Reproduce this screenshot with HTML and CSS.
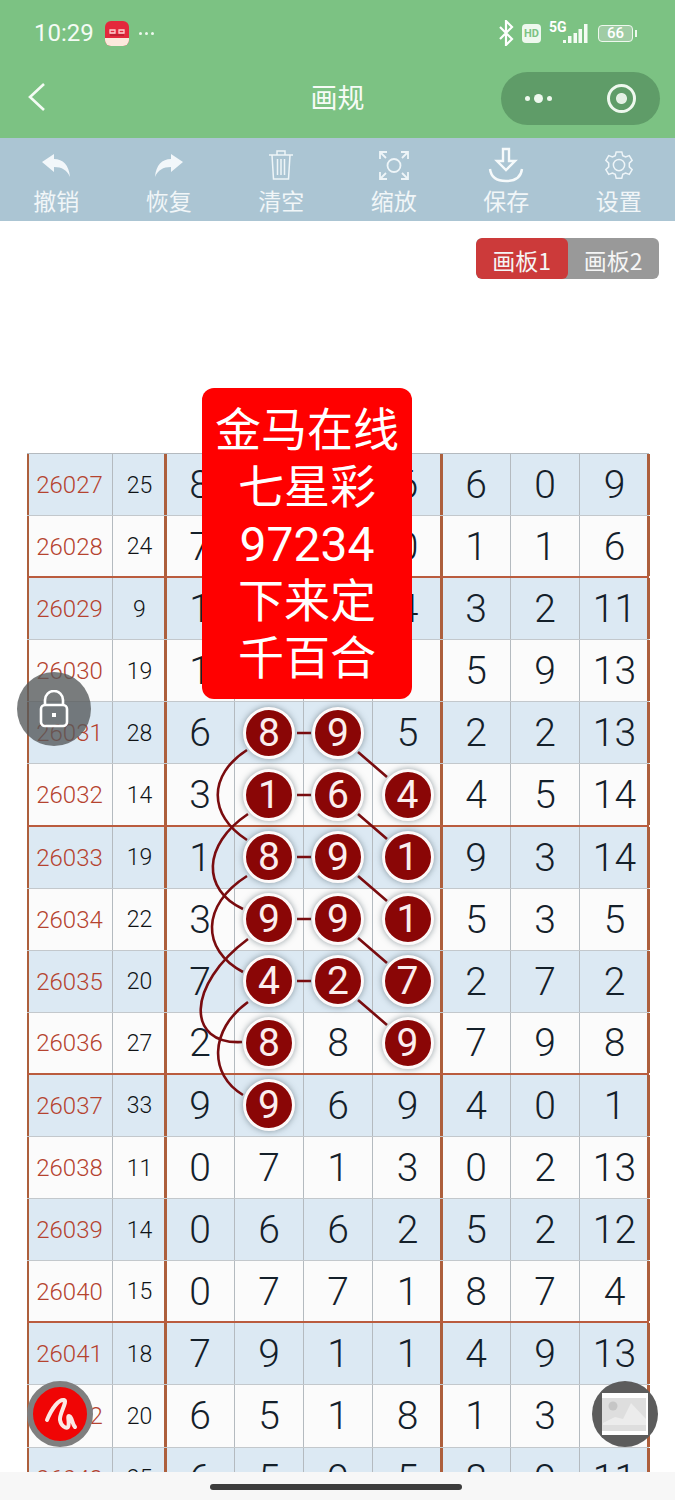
FILE: index.html
```html
<!DOCTYPE html>
<html>
<head>
   <meta charset="utf-8" />
   <title>画规</title>
   <link rel="stylesheet" href="styles.css">
</head>
<body>
   <header class="app-head">
       <div class="status-bar">
           <div class="status-left">
               <span class="time">10:29</span>
               <svg class="app-icon" width="24" height="25" viewBox="0 0 24 25">
                   <rect x="0" y="0" width="24" height="25" rx="6" fill="#e4283c"/>
                   <path d="M0 17h24v2a6 6 0 0 1-6 6H6a6 6 0 0 1-6-6z" fill="#fbe9dc"/>
                   <path d="M5 12V9h5v3zM14 12V9h5v3z" fill="none" stroke="#fbd3d3" stroke-width="1.300"/>
                   <path d="M5 14h14" stroke="#b81c2e" stroke-width="1.500"/>
               </svg>
               <span class="more-dots"><i></i><i></i><i></i></span>
           </div>
           <div class="status-right">
               <svg width="16" height="26" viewBox="0 0 16 26" fill="none" stroke="#fff" stroke-width="2.2">
                   <path d="M2 7l12 12-6 6V1l6 6L2 19"/>
               </svg>
               <span class="hd">HD</span>
               <div class="net">
                   <span class="net-label">5G</span>
                   <svg width="25" height="20" viewBox="0 0 25 20" fill="#f4fbf4">
                       <rect x="0" y="16" width="3" height="3"/><rect x="5" y="12" width="3.500" height="7"/>
                       <rect x="10.500" y="9" width="3.500" height="10"/><rect x="15.500" y="5" width="3.500" height="14"/>
                       <rect x="21" y="0" width="3.500" height="19"/>
                   </svg>
               </div>
               <div class="battery"><span class="battery-body">66</span><span class="battery-tip"></span></div>
           </div>
       </div>
       <div class="nav-bar">
           <svg class="back" width="20" height="32" viewBox="0 0 20 32" fill="none" stroke="#f4fbf4" stroke-width="2.6">
               <path d="M17 3L3 16l14 13"/>
           </svg>
           <span class="nav-title">画规</span>
           <div class="capsule">
               <span class="capsule-dots"><i></i><b></b><i></i></span>
               <span class="capsule-target"></span>
           </div>
       </div>
   </header>

   <nav class="toolbar">
       <div class="tool">
           <div class="tool-icon"><svg width="30" height="23" viewBox="0 0 30 23" fill="#f2f7fa"><path d="M1 8L13 0v5c9 0 15 6 16 18-3-7-8-10-16-10v5z"/></svg></div>
           <span>撤销</span>
       </div>
       <div class="tool">
           <div class="tool-icon"><svg width="30" height="23" viewBox="0 0 30 23" fill="#f2f7fa"><path d="M29 8L17 0v5C8 5 2 11 1 23c3-7 8-10 16-10v5z"/></svg></div>
           <span>恢复</span>
       </div>
       <div class="tool">
           <div class="tool-icon"><svg width="28" height="32" viewBox="0 0 28 32" fill="none" stroke="#eef5f8" stroke-width="1.5">
               <path d="M2 6h24M10 6V2h8v4M5 6l1.500 24h15L23 6M10.500 10v16M14 10v16M17.500 10v16"/>
           </svg></div>
           <span>清空</span>
       </div>
       <div class="tool">
           <div class="tool-icon"><svg width="30" height="29" viewBox="0 0 30 29" fill="none" stroke="#eef5f8" stroke-width="1.800">
               <circle cx="15" cy="14.500" r="6.500"/>
               <path d="M1 8V1h7M1 1l6 6M29 8V1h-7M29 1l-6 6M1 21v7h7M1 28l6-6M29 21v7h-7M29 28l-6-6"/>
           </svg></div>
           <span>缩放</span>
       </div>
       <div class="tool">
           <div class="tool-icon"><svg width="36" height="36" viewBox="0 0 36 36" fill="none" stroke="#f6fafb" stroke-width="2.4">
               <path d="M15 2h6v12h6l-9 9-9-9h6zM2 22c1 8 7 12 16 12s15-4 16-12"/>
           </svg></div>
           <span>保存</span>
       </div>
       <div class="tool">
           <div class="tool-icon"><svg width="30" height="30" viewBox="0 0 32 32" fill="none" stroke="#eef5f8" stroke-width="1.600">
               <path d="M13 2h6l1 4 3 1.500 4-1.500 3 5-3 3v4l3 3-3 5-4-1.500-3 1.500-1 4h-6l-1-4-3-1.500-4 1.500-3-5 3-3v-4l-3-3 3-5 4 1.500 3-1.500z"/>
               <circle cx="16" cy="16" r="6"/>
           </svg></div>
           <span>设置</span>
       </div>
   </nav>

   <main class="content">
       <div class="tabs">
           <span class="tab tab-on">画板1</span>
           <span class="tab">画板2</span>
       </div>

       <div class="board">
           <div class="row blue"><span class="c-id">26027</span><span class="c-sum">25</span><span class="c-num bar">8</span><span class="c-num"></span><span class="c-num"></span><span class="c-num">6</span><span class="c-num bar">6</span><span class="c-num">0</span><span class="c-num">9</span></div>
           <div class="row sep"><span class="c-id">26028</span><span class="c-sum">24</span><span class="c-num bar">7</span><span class="c-num"></span><span class="c-num"></span><span class="c-num">0</span><span class="c-num bar">1</span><span class="c-num">1</span><span class="c-num">6</span></div>
           <div class="row blue"><span class="c-id">26029</span><span class="c-sum">9</span><span class="c-num bar">1</span><span class="c-num"></span><span class="c-num"></span><span class="c-num">4</span><span class="c-num bar">3</span><span class="c-num">2</span><span class="c-num">11</span></div>
           <div class="row"><span class="c-id">26030</span><span class="c-sum">19</span><span class="c-num bar">1</span><span class="c-num"></span><span class="c-num"></span><span class="c-num"></span><span class="c-num bar">5</span><span class="c-num">9</span><span class="c-num">13</span></div>
           <div class="row blue"><span class="c-id">26031</span><span class="c-sum">28</span><span class="c-num bar">6</span><span class="c-num"><b class="ball">8</b></span><span class="c-num"><b class="ball">9</b></span><span class="c-num">5</span><span class="c-num bar">2</span><span class="c-num">2</span><span class="c-num">13</span></div>
           <div class="row sep"><span class="c-id">26032</span><span class="c-sum">14</span><span class="c-num bar">3</span><span class="c-num"><b class="ball">1</b></span><span class="c-num"><b class="ball">6</b></span><span class="c-num"><b class="ball">4</b></span><span class="c-num bar">4</span><span class="c-num">5</span><span class="c-num">14</span></div>
           <div class="row blue"><span class="c-id">26033</span><span class="c-sum">19</span><span class="c-num bar">1</span><span class="c-num"><b class="ball">8</b></span><span class="c-num"><b class="ball">9</b></span><span class="c-num"><b class="ball">1</b></span><span class="c-num bar">9</span><span class="c-num">3</span><span class="c-num">14</span></div>
           <div class="row"><span class="c-id">26034</span><span class="c-sum">22</span><span class="c-num bar">3</span><span class="c-num"><b class="ball">9</b></span><span class="c-num"><b class="ball">9</b></span><span class="c-num"><b class="ball">1</b></span><span class="c-num bar">5</span><span class="c-num">3</span><span class="c-num">5</span></div>
           <div class="row blue"><span class="c-id">26035</span><span class="c-sum">20</span><span class="c-num bar">7</span><span class="c-num"><b class="ball">4</b></span><span class="c-num"><b class="ball">2</b></span><span class="c-num"><b class="ball">7</b></span><span class="c-num bar">2</span><span class="c-num">7</span><span class="c-num">2</span></div>
           <div class="row sep"><span class="c-id">26036</span><span class="c-sum">27</span><span class="c-num bar">2</span><span class="c-num"><b class="ball">8</b></span><span class="c-num">8</span><span class="c-num"><b class="ball">9</b></span><span class="c-num bar">7</span><span class="c-num">9</span><span class="c-num">8</span></div>
           <div class="row blue"><span class="c-id">26037</span><span class="c-sum">33</span><span class="c-num bar">9</span><span class="c-num"><b class="ball">9</b></span><span class="c-num">6</span><span class="c-num">9</span><span class="c-num bar">4</span><span class="c-num">0</span><span class="c-num">1</span></div>
           <div class="row"><span class="c-id">26038</span><span class="c-sum">11</span><span class="c-num bar">0</span><span class="c-num">7</span><span class="c-num">1</span><span class="c-num">3</span><span class="c-num bar">0</span><span class="c-num">2</span><span class="c-num">13</span></div>
           <div class="row blue"><span class="c-id">26039</span><span class="c-sum">14</span><span class="c-num bar">0</span><span class="c-num">6</span><span class="c-num">6</span><span class="c-num">2</span><span class="c-num bar">5</span><span class="c-num">2</span><span class="c-num">12</span></div>
           <div class="row sep"><span class="c-id">26040</span><span class="c-sum">15</span><span class="c-num bar">0</span><span class="c-num">7</span><span class="c-num">7</span><span class="c-num">1</span><span class="c-num bar">8</span><span class="c-num">7</span><span class="c-num">4</span></div>
           <div class="row blue"><span class="c-id">26041</span><span class="c-sum">18</span><span class="c-num bar">7</span><span class="c-num">9</span><span class="c-num">1</span><span class="c-num">1</span><span class="c-num bar">4</span><span class="c-num">9</span><span class="c-num">13</span></div>
           <div class="row"><span class="c-id">26042</span><span class="c-sum">20</span><span class="c-num bar">6</span><span class="c-num">5</span><span class="c-num">1</span><span class="c-num">8</span><span class="c-num bar">1</span><span class="c-num">3</span><span class="c-num">13</span></div>
           <div class="row blue"><span class="c-id">26043</span><span class="c-sum">25</span><span class="c-num bar">6</span><span class="c-num">5</span><span class="c-num">9</span><span class="c-num">5</span><span class="c-num bar">8</span><span class="c-num">9</span><span class="c-num">11</span></div>

           <!-- lines between the balls, coordinates are relative to the page -->
           <svg class="links" width="623" height="1080" viewBox="27 454 623 1080" fill="none" stroke="#7a0c0f" stroke-width="2.6">
               <path d="M297 733h14M297 795h14M297 857h14M297 919h14M297 981h14"/>
               <path d="M358 752l29 25M358 814l29 25M358 876l29 25M358 938l29 25M358 1000l29 25"/>
               <path d="M247 750C208 775 208 815 247 840"/>
               <path d="M248 814C202 845 202 890 243 909"/>
               <path d="M247 876C201 905 201 950 243 972"/>
               <path d="M248 939C186 985 186 1045 242 1042"/>
               <path d="M248 1002C209 1030 209 1075 243 1095"/>
           </svg>
       </div>

       <div class="notice">
           <div>金马在线</div>
           <div>七星彩</div>
           <div class="notice-num">97234</div>
           <div>下来定</div>
           <div>千百合</div>
       </div>
   </main>

   <div class="fab fab-lock">
       <svg width="30" height="38" viewBox="0 0 30 38" fill="none" stroke="#fff" stroke-width="2.6">
           <path d="M6 15V10a9 9 0 0 1 18 0v5"/>
           <rect x="2" y="15" width="26" height="21" rx="4"/>
           <rect x="13" y="23" width="4" height="4" fill="#fff" stroke="none"/>
       </svg>
   </div>
   <div class="fab fab-pen">
       <svg width="36" height="36" viewBox="0 0 36 36" fill="none" stroke="#fbe8e4" stroke-width="4" stroke-linecap="round" stroke-linejoin="round">
           <path d="M5 24C10 12 17 3 22 4C26 5 17 18 18 24C19 30 24 33 26 31C28 28 25 20 27 20C30 20 30 28 33 31"/>
       </svg>
   </div>
   <div class="fab fab-picture">
       <svg width="46" height="42" viewBox="0 0 46 42">
           <rect x="0" y="0" width="46" height="42" fill="#fff"/>
           <rect x="0" y="5" width="44" height="33" fill="#dedede"/>
           <circle cx="11" cy="13" r="4.500" fill="#c6c6c6"/>
           <path d="M1 30l12-6 8 2 8-16 15 16v6H1z" fill="#ececec"/>
       </svg>
   </div>

   <div class="home-bar"><span class="home-pill"></span></div>
</body>
</html>
```

FILE: styles.css
```css
body, html {
    margin: 0;
    width: 675px;
    height: 1500px;
    overflow: hidden;
}
body {
    position: relative;
    display: flex;
    flex-direction: column;
    background-color: #fff;
    font-family: "Noto Sans CJK SC", "Noto Sans", sans-serif;
}

/* top green area */
.app-head {
    height: 138px;
    background-color: #7cc283;
    color: #fff;
    flex: none;
}
.status-bar {
    height: 66px;
    padding: 0 38px 0 34px;
    display: flex;
    justify-content: space-between;
    align-items: center;
}
.status-left, .status-right {
    display: flex;
    align-items: center;
}
.time {
    font-family: Roboto, sans-serif;
    font-size: 24px;
    color: #f4fbf4;
}
.app-icon {
    margin-left: 11px;
}
.more-dots {
    display: flex;
    gap: 3px;
    margin-left: 10px;
}
.more-dots i {
    width: 3px;
    height: 3px;
    border-radius: 50%;
    background-color: #eef8ee;
}
.status-right {
    gap: 8px;
}
.hd {
    width: 19px;
    height: 19px;
    border-radius: 4px;
    background-color: #eef8ee;
    color: #7cc283;
    font: bold 11px/19px Roboto, sans-serif;
    text-align: center;
}
.net {
    position: relative;
    width: 39px;
    height: 22px;
    display: flex;
    justify-content: flex-end;
    align-items: flex-end;
}
.net-label {
    position: absolute;
    left: 0;
    top: -2px;
    font: bold 14px/15px Roboto, sans-serif;
}
.battery {
    display: flex;
    align-items: center;
    gap: 2px;
    margin-left: 2px;
}
.battery-body {
    width: 33px;
    height: 15px;
    border: 1.500px solid #eef8ee;
    border-radius: 4px;
    background-color: #a0cca4;
    font: 500 15px/15px Roboto, sans-serif;
    text-align: center;
}
.battery-tip {
    width: 2px;
    height: 7px;
    background-color: #eef8ee;
}
.nav-bar {
    height: 72px;
    position: relative;
    display: flex;
    justify-content: center;
    align-items: center;
}
.back {
    position: absolute;
    left: 27px;
    top: 15px;
}
.nav-title {
    font-size: 27px;
    color: #f6fbf6;
    margin-top: -12px;
}
.capsule {
    position: absolute;
    left: 501px;
    top: 6px;
    width: 159px;
    height: 53px;
    box-sizing: border-box;
    padding: 0 24px;
    border-radius: 27px;
    background-color: #5f9c68;
    display: flex;
    justify-content: space-between;
    align-items: center;
}
.capsule-dots {
    display: flex;
    align-items: center;
    gap: 4px;
}
.capsule-dots i {
    width: 5px;
    height: 5px;
    border-radius: 50%;
    background-color: #eef8ee;
}
.capsule-dots b {
    width: 9px;
    height: 9px;
    border-radius: 50%;
    background-color: #eef8ee;
}
.capsule-target {
    width: 23px;
    height: 23px;
    border-radius: 50%;
    border: 3px solid #eef8ee;
    background: radial-gradient(circle, #e4f0e4 0 5px, transparent 6px);
}

/* toolbar */
.toolbar {
    height: 83px;
    box-sizing: border-box;
    padding-top: 9px;
    background-color: #abc5d3;
    display: flex;
    flex: none;
}
.tool {
    flex: 1;
    display: flex;
    flex-direction: column;
    align-items: center;
    color: #f1f6f8;
    font-size: 23px;
    line-height: 34px;
}
.tool-icon {
    height: 36px;
    display: flex;
    align-items: center;
}
.tool svg {
    display: block;
}

/* board */
.content {
    flex: 1;
    min-height: 0;
    overflow: hidden;
    position: relative;
}
.tabs {
    width: 183px;
    height: 41px;
    margin: 17px 16px 0 auto;
    display: flex;
    border-radius: 6px;
    overflow: hidden;
    background-color: #999;
    color: #f5f5f5;
    font-size: 23px;
    line-height: 45px;
}
.tab {
    flex: 1;
    text-align: center;
}
.tab-on {
    background-color: #cc3a3a;
    border-radius: 6px;
}
.board {
    position: relative;
    margin: 174px 0 0 27px;
    width: 622px;
    border-top: 1px solid #b4babf;
}
.row {
    display: grid;
    grid-template-columns: 86px 53px repeat(7, 69px);
    height: 62.1px;
    background-color: #fbfbfb;
    box-sizing: border-box;
    border-bottom: 1px solid #c3c8cc;
}
.row.blue {
    background-color: #dce9f3;
}
.row.sep {
    border-bottom: 2px solid #ba5c3e;
}
.row > span {
    display: flex;
    justify-content: center;
    align-items: center;
    box-sizing: border-box;
    border-right: 1px solid #b4babf;
    padding-top: 1px;
}
.row > span:last-child {
    border-right: none;
    box-shadow: inset -2px 0 0 #ad5f3c, 1px 0 0 #ad5f3c;
}
.row > .c-id {
    box-shadow: inset 2px 0 0 #ad5f3c;
}
.c-id {
    font-family: Roboto, sans-serif;
    font-weight: 300;
    font-size: 24px;
    color: #b5432f;
}
.c-sum {
    font-family: Roboto, sans-serif;
    font-weight: 300;
    font-size: 23px;
    color: #0f1316;
}
.row > .c-sum {
    border-right: none;
}
.c-num {
    font-family: Roboto, sans-serif;
    font-weight: 300;
    font-size: 39px;
    color: #14202a;
}
.row > .bar {
    box-shadow: -2px 0 0 #ad5f3c, inset 1px 0 0 #ad5f3c;
}
.row > .c-num:nth-child(6) {
    border-right: none;
}
.ball {
    width: 46px;
    height: 46px;
    box-sizing: content-box;
    border: 3.500px solid #fdfafa;
    border-radius: 50%;
    background-color: #8a0606;
    color: #fbeeee;
    font-weight: 400;
    line-height: 46px;
    text-align: center;
    box-shadow: 0 0 6px rgba(60, 80, 90, 0.55);
    position: relative;
    z-index: 2;
    flex: none;
    margin-top: -1px;
}
.links {
    position: absolute;
    left: 0;
    top: 0;
    z-index: 1;
}
.notice {
    position: absolute;
    left: 202px;
    top: 167px;
    width: 210px;
    height: 311px;
    box-sizing: border-box;
    padding-top: 10px;
    border-radius: 12px;
    background-color: #ff0000;
    color: #fff;
    font-size: 46px;
    line-height: 57px;
    text-align: center;
    z-index: 3;
}
.notice-num {
    font-family: Roboto, sans-serif;
    font-size: 48px;
    padding-top: 4px;
    margin-bottom: -4px;
}

/* floating buttons */
.fab {
    position: absolute;
    border-radius: 50%;
    display: flex;
    justify-content: center;
    align-items: center;
    z-index: 4;
}
.fab-lock {
    left: 17px;
    top: 672px;
    width: 74px;
    height: 74px;
    background-color: rgba(85, 88, 90, 0.78);
}
.fab-pen {
    left: 27px;
    top: 1381px;
    width: 54px;
    height: 54px;
    border: 6px solid #7f7f7f;
    background-color: #f00505;
}
.fab-picture {
    left: 592px;
    top: 1381px;
    width: 66px;
    height: 66px;
    background-color: #5c5c5c;
}
.home-bar {
    height: 28px;
    flex: none;
    background-color: #f7f7f7;
    display: flex;
    justify-content: center;
    align-items: center;
    z-index: 1;
}
.home-pill {
    width: 252px;
    height: 6px;
    border-radius: 3px;
    background-color: #3c3c3c;
    margin: 1px 3px 0 0;
}
```
